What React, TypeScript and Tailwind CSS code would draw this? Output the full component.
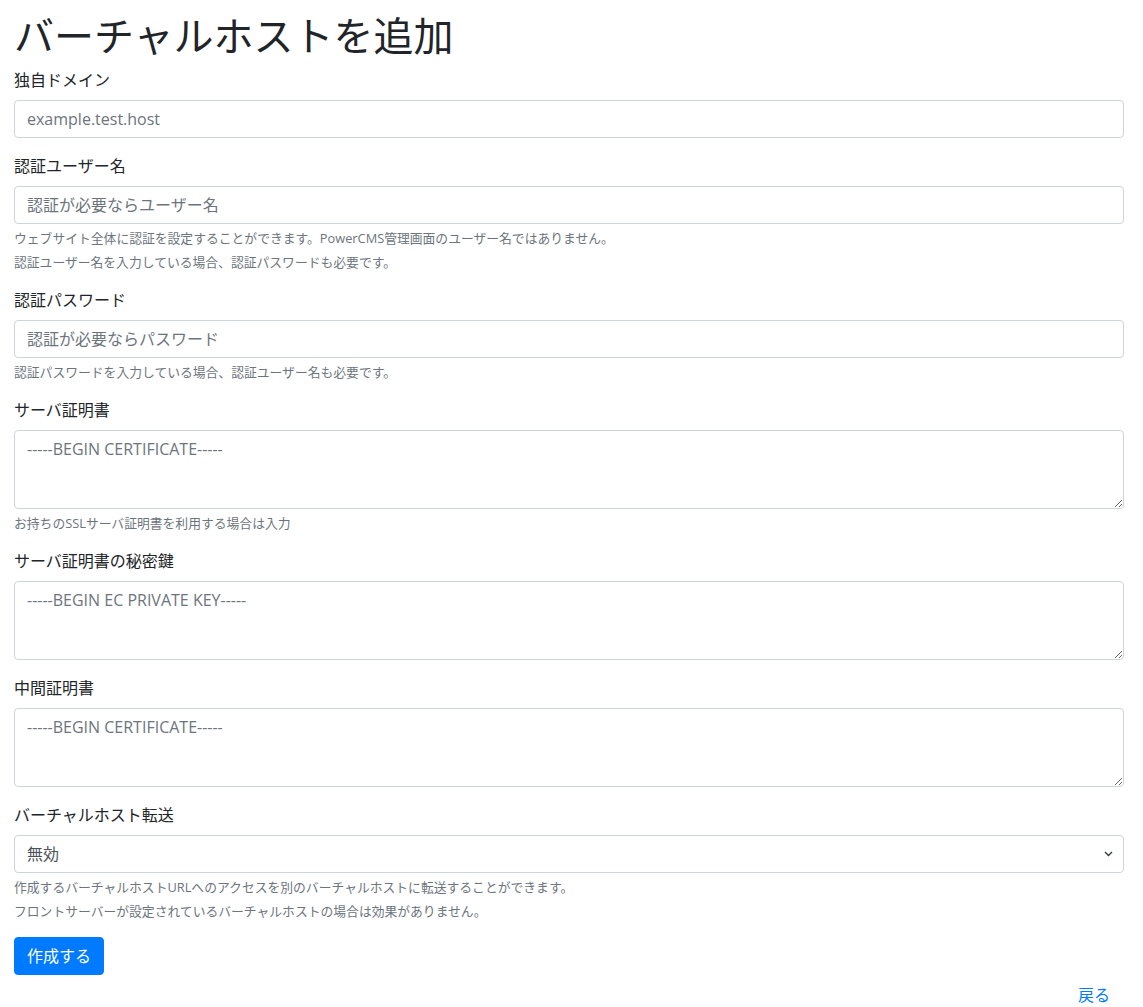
import { ReactNode } from 'react'

const font = { fontFamily: '"Open Sans", "Noto Sans CJK JP", sans-serif' }

const inputCls =
  'block w-full h-[38px] px-3 text-base leading-6 text-[#495057] bg-white border border-[#ced4da] rounded-[4px] placeholder:text-[#6c757d] outline-none'

const areaCls =
  'block w-full h-[79px] px-3 py-[6px] text-base leading-6 text-[#495057] bg-white border border-[#ced4da] rounded-[4px] placeholder:text-[#6c757d] outline-none'

function Help({ children }: { children: ReactNode }) {
  return <small className="block mt-1 text-[12.8px] leading-5 text-[#6c757d]">{children}</small>
}

function Group({ label, children }: { label: string; children: ReactNode }) {
  return (
    <div className="mb-4">
      <label className="block mb-2 text-base leading-6 font-normal">{label}</label>
      {children}
    </div>
  )
}

export default function App() {
  return (
    <div className="min-h-screen bg-white text-[#212529] pl-[14px] pr-[19px] pt-3" style={font}>
      <h1 className="text-[40px] leading-[48px] font-normal mb-2">バーチャルホストを追加</h1>

      <form onSubmit={(e) => e.preventDefault()}>
        <Group label="独自ドメイン">
          <input className={inputCls} placeholder="example.test.host" />
        </Group>

        <Group label="認証ユーザー名">
          <input className={inputCls} placeholder="認証が必要ならユーザー名" />
          <Help>ウェブサイト全体に認証を設定することができます。PowerCMS管理画面のユーザー名ではありません。</Help>
          <Help>認証ユーザー名を入力している場合、認証パスワードも必要です。</Help>
        </Group>

        <Group label="認証パスワード">
          <input className={inputCls} placeholder="認証が必要ならパスワード" />
          <Help>認証パスワードを入力している場合、認証ユーザー名も必要です。</Help>
        </Group>

        <Group label="サーバ証明書">
          <textarea className={areaCls} placeholder="-----BEGIN CERTIFICATE-----" />
          <Help>お持ちのSSLサーバ証明書を利用する場合は入力</Help>
        </Group>

        <Group label="サーバ証明書の秘密鍵">
          <textarea className={areaCls} placeholder="-----BEGIN EC PRIVATE KEY-----" />
        </Group>

        <Group label="中間証明書">
          <textarea className={areaCls} placeholder="-----BEGIN CERTIFICATE-----" />
        </Group>

        <Group label="バーチャルホスト転送">
          <div className="relative">
            <select className={inputCls + ' appearance-none pr-8'} defaultValue="off">
              <option value="off">無効</option>
            </select>
            {/* chevron like bootstrap's custom-select */}
            <svg
              className="absolute right-[11px] top-1/2 -translate-y-1/2 pointer-events-none"
              width="9"
              height="6"
              viewBox="0 0 9 6"
            >
              <path d="M1 1 L4.5 4.5 L8 1" fill="none" stroke="#343a40" strokeWidth="1.4" />
            </svg>
          </div>
          <Help>作成するバーチャルホストURLへのアクセスを別のバーチャルホストに転送することができます。</Help>
          <Help>フロントサーバーが設定されているバーチャルホストの場合は効果がありません。</Help>
        </Group>

        <button
          type="submit"
          className="h-[38px] px-3 text-base leading-6 text-white bg-[#007bff] border border-[#007bff] rounded-[4px]"
        >
          作成する
        </button>
      </form>

      <div className="flex justify-end pr-[14px] mt-2 pb-2">
        <a href="#" className="text-base leading-6 text-[#007bff]">戻る</a>
      </div>
    </div>
  )
}
